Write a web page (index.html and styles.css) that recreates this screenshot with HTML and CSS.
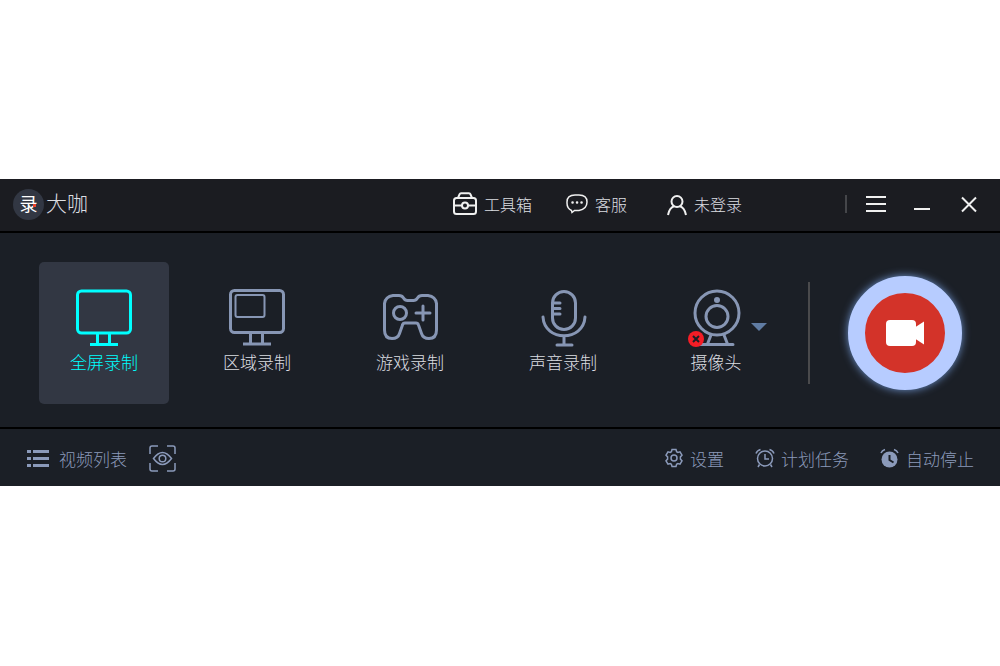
FILE: index.html
```html
<!DOCTYPE html>
<html lang="zh-CN">
<head>
    <meta charset="UTF-8">
    <meta name="viewport" content="width=device-width, initial-scale=1.0">
    <title>录大咖</title>
    <link rel="stylesheet" href="styles.css">
</head>
<body>
    <div class="recorder">
        <!-- Title bar -->
        <header class="titlebar">
            <div class="brand">
                <span class="brand-badge">录<i class="brand-dot"></i></span>
                <span class="brand-name">大咖</span>
            </div>

            <nav class="tools">
                <button class="tool">
                    <svg width="24" height="24" viewBox="0 0 24 24">
                        <rect x="1" y="6" width="22" height="16" rx="2.5"/>
                        <path d="M5 6l1.5-3.6Q7 1.2 8 1.2h8q1 0 1.5 1.2L19 6M1 13.5h8M15 13.5h8"/>
                        <circle cx="12" cy="13.5" r="3"/>
                    </svg>
                    工具箱
                </button>
                <button class="tool tool-chat">
                    <svg width="22" height="22" viewBox="0 0 22 22">
                        <path class="thin" d="M5.5 17.500Q1 15.500 1 10V9Q1 2 9 2h4q8 0 8 7t-8 8.500H8.500L6 19.500z"/>
                        <path class="dots" d="M6.500 9.500h.1M11 9.500h.1M15.500 9.500h.1"/>
                    </svg>
                    客服
                </button>
                <button class="tool tool-user">
                    <svg width="20" height="24" viewBox="0 0 20 24">
                        <circle cx="10" cy="9.500" r="5.500"/>
                        <path d="M1 23q1.500-7.500 6-8.800M19 23q-1.500-7.500-6-8.800"/>
                    </svg>
                    未登录
                </button>
            </nav>

            <div class="window-buttons">
                <button class="menu" aria-label="菜单">
                    <svg width="20" height="18" viewBox="0 0 20 18"><path d="M0 2h20M0 9h20M0 16h20"/></svg>
                </button>
                <button aria-label="最小化">
                    <svg width="16" height="18" viewBox="0 0 16 18"><path d="M0 14h16"/></svg>
                </button>
                <button aria-label="关闭">
                    <svg width="16" height="18" viewBox="0 0 16 18"><path d="M1 2.500l14 14M15 2.500L1 16.500"/></svg>
                </button>
            </div>
        </header>

        <!-- Recording modes -->
        <main class="modes">
            <div class="mode-list">
                <button class="mode active">
                    <svg width="60" height="60" viewBox="0 0 60 60">
                        <rect x="3.500" y="4" width="53" height="42" rx="4"/>
                        <path d="M23.500 46v10M35.500 46v10M16 57.500h28"/>
                    </svg>
                    全屏录制
                </button>
                <button class="mode">
                    <svg width="60" height="60" viewBox="0 0 60 60">
                        <rect x="3.500" y="3.500" width="53" height="42" rx="4"/>
                        <rect class="region" x="8.500" y="8" width="29" height="22" rx="2"/>
                        <path d="M23.500 46v10M35.500 46v10M16 57h28"/>
                    </svg>
                    区域录制
                </button>
                <button class="mode">
                    <svg width="60" height="60" viewBox="0 0 60 60">
                        <path class="round" d="M13 8.500h6q3 0 4.500 2.500t4 2.500h6q2.500 0 4-2.500t4.500-2.500h6q7.500 1 8.500 8V43q0 8.500-7.500 8.500-6 0-7.500-5l-3-8.500q-.6-2-2.500-2H25q-2 0-2.500 2l-3 8.500q-1.500 5-7.500 5-7.500 0-7.500-8.500V16.500q1-7 8.500-8z"/>
                        <circle cx="20" cy="26" r="6.500"/>
                        <path class="round" d="M43 19v14M36 26h14"/>
                    </svg>
                    游戏录制
                </button>
                <button class="mode">
                    <svg width="60" height="60" viewBox="0 0 60 60">
                        <rect x="19.500" y="4.500" width="23" height="38" rx="11.500"/>
                        <path class="round" d="M20 16h7M20 21.500h7M20 27h7M10 30c1.500 25 40.500 25 42 0M31 49v9M24 58h15"/>
                    </svg>
                    声音录制
                </button>
                <div class="camera">
                    <button class="mode">
                        <span class="camera-icon">
                            <svg width="60" height="60" viewBox="0 0 60 60">
                                <circle cx="31" cy="26" r="22"/>
                                <circle cx="31" cy="29.500" r="11"/>
                                <circle class="fill" cx="31" cy="13" r="3"/>
                                <path class="round" d="M25 48l-3.500 9M38 48l3.500 9M14 57.500h33"/>
                            </svg>
                            <svg class="off-badge" width="16" height="16" viewBox="0 0 16 16">
                                <circle cx="8" cy="8" r="8"/>
                                <path d="M5 5l6 6M11 5l-6 6"/>
                            </svg>
                        </span>
                        摄像头
                    </button>
                    <button class="camera-menu" aria-label="选择摄像头">
                        <svg width="16" height="8" viewBox="0 0 16 8"><path d="M0 0h16L8 8z"/></svg>
                    </button>
                </div>
            </div>

            <div class="record-area">
                <button class="record" aria-label="开始录制">
                    <svg width="40" height="28" viewBox="0 0 40 28">
                        <rect x="1" y="1" width="30" height="26" rx="4"/>
                        <path d="M29 9l10-6.500v23L29 19z"/>
                    </svg>
                </button>
            </div>
        </main>

        <!-- Bottom bar -->
        <footer class="bottombar">
            <button class="link">
                <svg class="list" width="22" height="20" viewBox="0 0 22 20">
                    <path d="M0 3.500h4M6 3.500h16M0 10.500h4M6 10.500h16M0 17.500h4M6 17.500h16"/>
                </svg>
                视频列表
            </button>
            <button class="link" aria-label="预览">
                <svg width="28" height="28" viewBox="0 0 28 28">
                    <path d="M1 10V4q0-2 2-2h6M18 2h6q2 0 2 2v6M26 19v6q0 2-2 2h-6M9 27H3q-2 0-2-2v-6"/>
                    <path d="M4.500 14.500Q9 8.500 13.500 8.500t9 6Q18 20.500 13.500 20.500t-9-6z"/>
                    <circle cx="13.500" cy="14.500" r="3.300"/>
                </svg>
            </button>

            <div class="options">
                <button class="link">
                    <svg width="20" height="20" viewBox="0 0 20 20">
                        <path d="M8 1.500h4l.6 2.200 1.200.7 2.200-.6 2 3.400-1.600 1.700v2.200l1.600 1.700-2 3.400-2.200-.6-1.200.7-.6 2.200H8l-.6-2.200-1.200-.7-2.200.6-2-3.400 1.600-1.700V8.900L2 7.200l2-3.400 2.200.6 1.200-.7z"/>
                        <circle cx="10" cy="10" r="3"/>
                    </svg>
                    设置
                </button>
                <button class="link">
                    <svg width="20" height="20" viewBox="0 0 20 20">
                        <circle cx="10" cy="10.500" r="7.500"/>
                        <path d="M10 6v5h4M1 5.500Q2 2.500 5.500 1.500M19 5.500Q18 2.500 14.500 1.500M4.500 16.500L3 19M15.500 16.500L17 19"/>
                    </svg>
                    计划任务
                </button>
                <button class="link">
                    <svg width="20" height="20" viewBox="0 0 20 20">
                        <circle class="fill" cx="9.500" cy="11.500" r="8"/>
                        <path d="M1 5Q2 2.500 5 1.500M18 5Q17 2.500 14 1.500"/>
                        <path class="hands" d="M9.500 7v5l4 2.500"/>
                    </svg>
                    自动停止
                </button>
            </div>
        </footer>
    </div>
</body>
</html>
```
FILE: styles.css
```css
* {
    box-sizing: border-box;
}
body {
    display: flex;
    align-items: center;
    min-height: 100vh;
    margin: 0;
    padding-bottom: 1px;
    background: #fff;
    font-family: "Noto Sans CJK SC", sans-serif;
    font-weight: 300;
}
button {
    display: flex;
    align-items: center;
    padding: 0;
    border: 0;
    background: none;
    color: inherit;
    font: inherit;
    white-space: nowrap;
    cursor: pointer;
}
svg {
    display: block;
    flex: none;
    fill: none;
    stroke: currentColor;
}
.fill {
    fill: currentColor;
    stroke: none;
}
.round {
    stroke-linecap: round;
    stroke-linejoin: round;
}
.recorder {
    width: 100%;
    background: #1b1f26;
    color: #dcdee2;
}

/* Title bar */
.titlebar {
    display: flex;
    align-items: center;
    height: 54px;
    padding: 0 23px 2px 13px;
    border-bottom: 2px solid #000;
    background: #1b1c21;
}
.brand {
    display: flex;
    flex: 1;
    align-items: center;
    gap: 2px;
    font-size: 21px;
}
.brand-name {
    padding-bottom: 4px;
}
.brand-badge {
    position: relative;
    display: flex;
    align-items: center;
    justify-content: center;
    width: 31px;
    height: 31px;
    padding-bottom: 2px;
    border-radius: 50%;
    background: #323743;
    color: #fff;
    font-size: 18px;
    font-weight: 400;
}
.brand-dot {
    position: absolute;
    top: 15px;
    right: 8px;
    width: 3px;
    height: 3px;
    background: #f0442c;
}
.tools {
    display: flex;
    align-items: center;
    font-size: 16px;
}
.tool {
    gap: 7px;
}
.tool svg {
    color: #f0f0f0;
    stroke-width: 2;
}
.tool .thin {
    stroke-width: 1.5;
}
.tool .dots {
    stroke-width: 2.5;
    stroke-linecap: round;
}
.tool-chat {
    margin-left: 34px;
}
.tool-user {
    margin-left: 40px;
}
.window-buttons {
    display: flex;
    align-items: center;
    gap: 28px;
    margin-left: 103px;
    color: #f0f0f0;
}
.window-buttons svg {
    stroke-width: 2;
}
.window-buttons button:last-child {
    margin-left: 3px;
}
.menu {
    padding-left: 19px;
    border-left: 2px solid #45464a;
}

/* Recording modes */
.modes {
    display: flex;
    align-items: center;
    justify-content: space-between;
    padding: 29px 38px 23px 39px;
}
.mode-list {
    display: flex;
    gap: 23px;
}
.mode {
    flex-direction: column;
    width: 130px;
    height: 142px;
    padding-top: 25px;
    border-radius: 5px;
    font-size: 17px;
    line-height: 30px;
}
.mode svg {
    color: #8796b4;
    stroke-width: 3;
}
.mode .region {
    stroke-width: 2;
}
.mode.active {
    background: #323743;
    color: #00ffff;
}
.mode.active svg {
    color: #00ffff;
}
.camera {
    position: relative;
}
.camera-icon {
    position: relative;
}
.mode .off-badge {
    position: absolute;
    left: 2px;
    bottom: 0;
    fill: #f51d26;
    stroke: #1b1f26;
    stroke-width: 2;
}
.off-badge circle {
    stroke: none;
}
.camera-menu {
    position: absolute;
    top: 61px;
    right: 14px;
    color: #607ca3;
}
.camera-menu path {
    fill: currentColor;
    stroke: none;
}
.record-area {
    display: flex;
    align-items: center;
    height: 102px;
    padding-left: 38px;
    border-left: 2px solid #4a4a4c;
}
.record {
    justify-content: center;
    width: 114px;
    height: 114px;
    border: 17px solid #b7ccff;
    border-radius: 50%;
    background: #d33329;
    box-shadow: 0 0 8px #6f94cf;
}
.record svg {
    fill: #fff;
    stroke: none;
}

/* Bottom bar */
.bottombar {
    display: flex;
    align-items: center;
    gap: 22px;
    height: 59px;
    padding: 1px 26px 0 27px;
    border-top: 2px solid #000;
    color: #8b9aba;
    font-size: 17px;
}
.link {
    gap: 10px;
}
.link svg {
    stroke-width: 1.5;
}
.link .list {
    stroke-width: 3;
}
.link .hands {
    stroke: #1b1f26;
    stroke-width: 2;
}
.options {
    display: flex;
    gap: 31px;
    margin-left: auto;
}
.options .link {
    gap: 6px;
}
```
